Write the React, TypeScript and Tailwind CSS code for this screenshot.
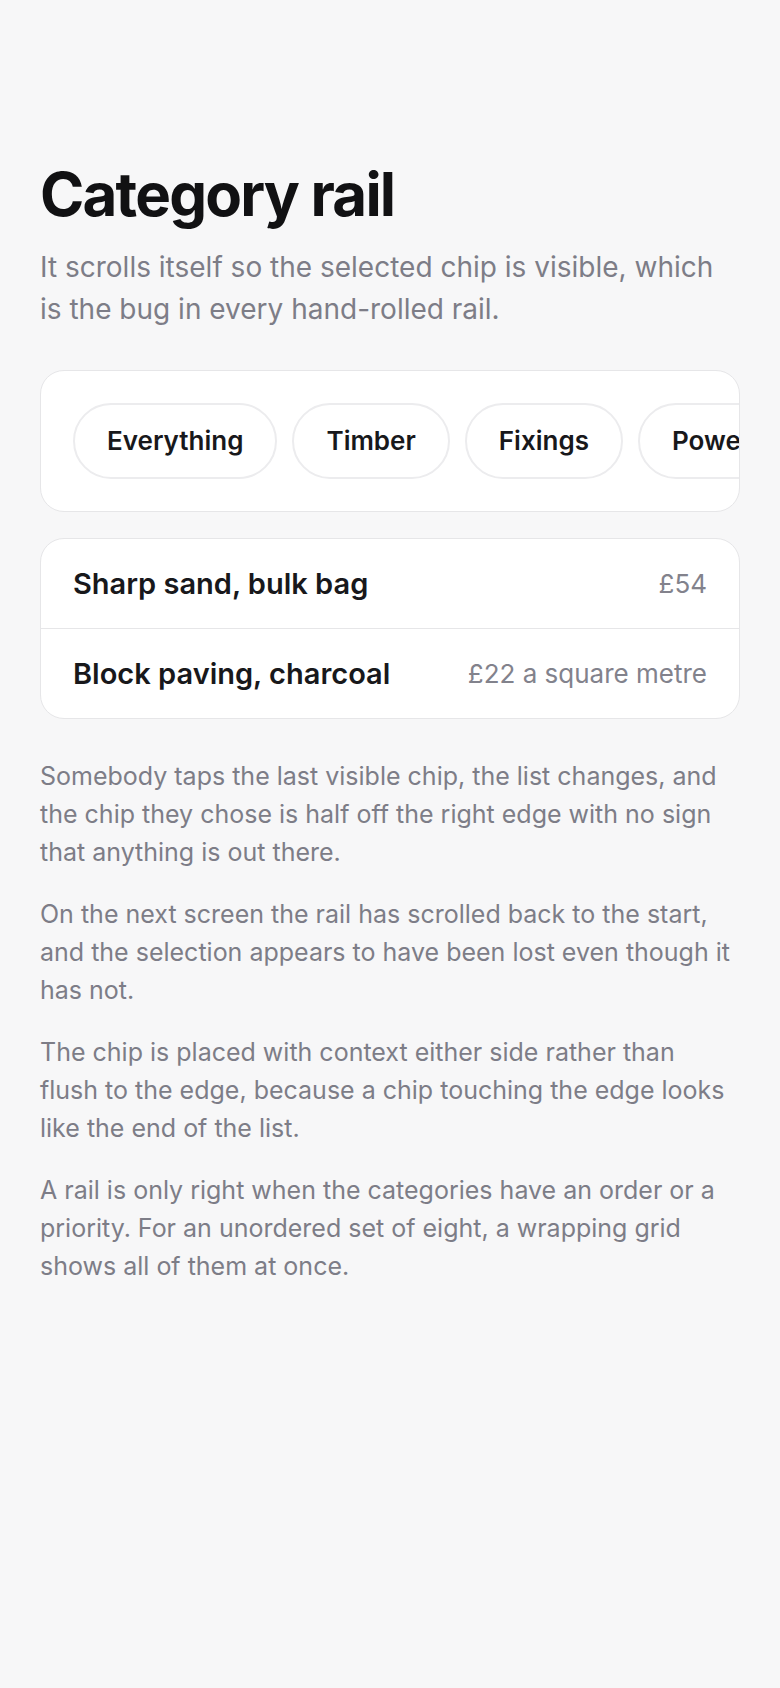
const chips = ["Everything", "Timber", "Fixings", "Power tools", "Plumbing", "Electrical", "Paint", "Garden"];

const items = [
  { name: "Sharp sand, bulk bag", price: "£54" },
  { name: "Block paving, charcoal", price: "£22 a square metre" },
];

const notes = [
  "Somebody taps the last visible chip, the list changes, and the chip they chose is half off the right edge with no sign that anything is out there.",
  "On the next screen the rail has scrolled back to the start, and the selection appears to have been lost even though it has not.",
  "The chip is placed with context either side rather than flush to the edge, because a chip touching the edge looks like the end of the list.",
  "A rail is only right when the categories have an order or a priority. For an unordered set of eight, a wrapping grid shows all of them at once.",
];

export default function App() {
  return (
    <div className="min-h-[1688px] bg-[#f7f7f8] px-10 pt-[161px] font-['Inter',sans-serif]">
      <h1 className="text-[60px] font-bold leading-[66px] tracking-[-0.03em] text-[#111113]">Category rail</h1>
      <p className="mt-[19px] max-w-[680px] text-[28px] leading-[42px] text-[#7d7d87]">
        It scrolls itself so the selected chip is visible, which is the bug in every hand-rolled rail.
      </p>

      <div className="mt-10 overflow-hidden rounded-3xl border border-[#e6e6e8] bg-white">
        <div className="flex gap-[15px] overflow-x-auto p-8">
          {chips.map((c) => (
            <button
              key={c}
              className="shrink-0 rounded-full border-2 border-[#ececee] bg-white px-[32px] py-[19px] text-[26px] font-semibold leading-[34px] text-[#18181b]"
            >
              {c}
            </button>
          ))}
        </div>
      </div>

      <div className="mt-[26px] rounded-3xl border border-[#e6e6e8] bg-white">
        {items.map((it, i) => (
          <div
            key={it.name}
            className={`flex items-center justify-between px-8 py-6 ${i > 0 ? "border-t border-[#e6e6e8]" : ""}`}
          >
            <span className="text-[29px] font-semibold leading-[41px] text-[#18181b]">{it.name}</span>
            <span className="text-[26px] leading-[41px] text-[#82828c]">{it.price}</span>
          </div>
        ))}
      </div>

      <div className="mt-[38px] max-w-[694px] space-y-6">
        {notes.map((n) => (
          <p key={n} className="text-[25px] leading-[38px] text-[#7d7d87]">
            {n}
          </p>
        ))}
      </div>
    </div>
  );
}
